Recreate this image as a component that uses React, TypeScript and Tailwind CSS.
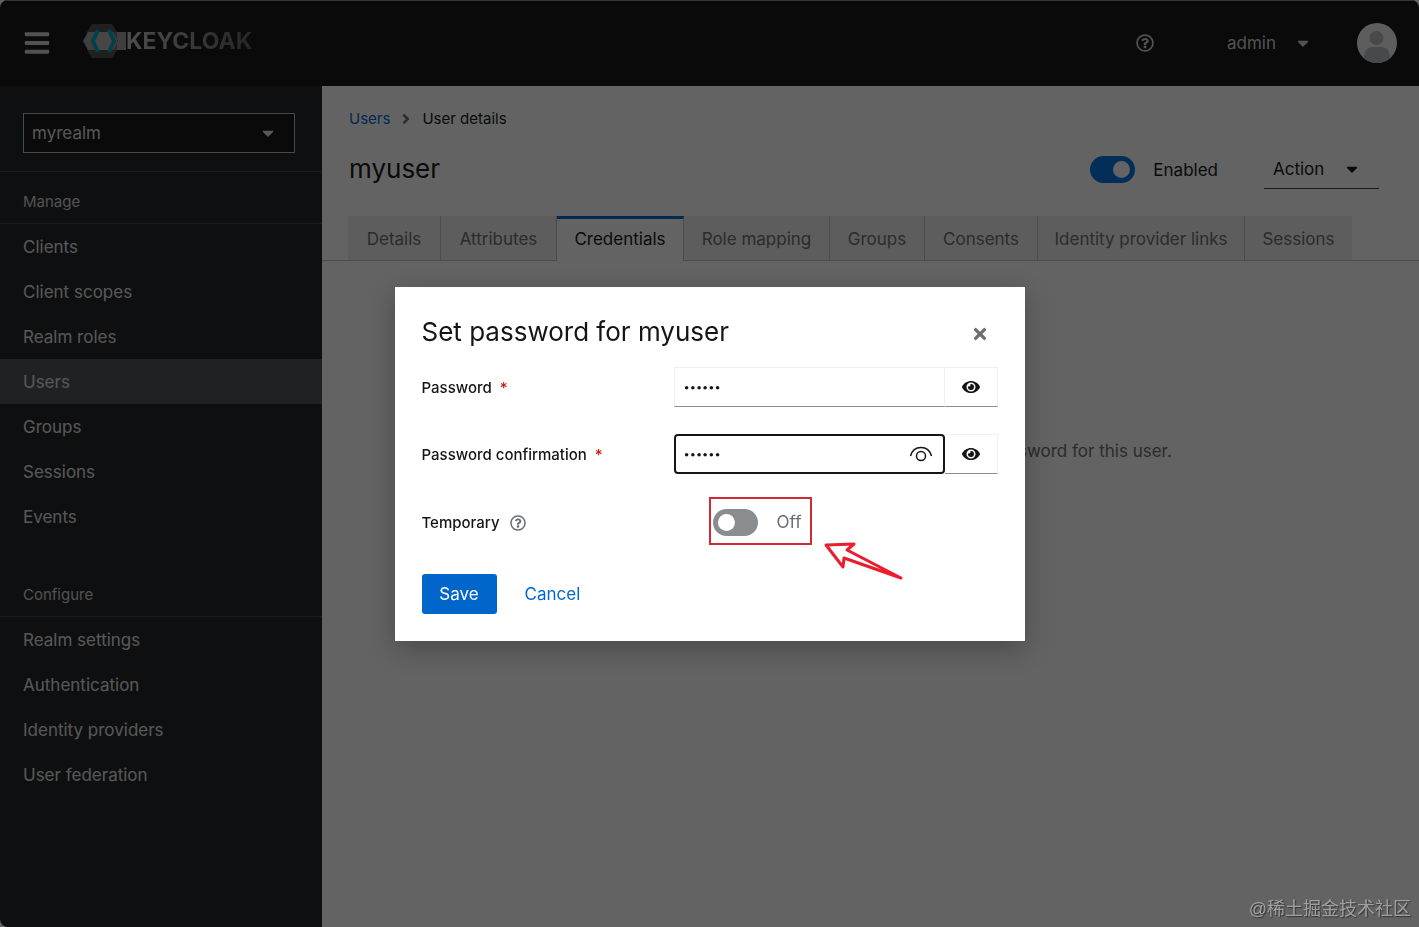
import { useState } from 'react'
import { FaAngleRight, FaBars, FaCaretDown, FaEye, FaRegQuestionCircle, FaTimes } from 'react-icons/fa'
import clsx from 'clsx'

const manageNav = ['Clients', 'Client scopes', 'Realm roles', 'Users', 'Groups', 'Sessions', 'Events']
const configureNav = ['Realm settings', 'Authentication', 'Identity providers', 'User federation']

const tabs = [
  { name: 'Details', width: 'w-[93px]' },
  { name: 'Attributes', width: 'w-[116px]' },
  { name: 'Credentials', width: 'w-[127px]' },
  { name: 'Role mapping', width: 'w-[146px]' },
  { name: 'Groups', width: 'w-[95px]' },
  { name: 'Consents', width: 'w-[113px]' },
  { name: 'Identity provider links', width: 'w-[207px]' },
  { name: 'Sessions', width: 'w-[107px]' },
]

function Logo() {
  return (
    <a href="#home" aria-label="Keycloak" className="mb-[3px] flex items-center">
      <svg width="44" height="36" viewBox="0 0 44 36" aria-hidden="true">
        <path d="M10 1h20l5 8v18l-5 8H10l-5-8V9z" fill="#505050" />
        <path d="M6 9h38v18H6L1 18z" fill="#a0a0a0" />
        <path d="M31 9h4v18h-4l5-9z" fill="#707070" />
        <path d="M17 9h9l6 9-6 9h-9l-6-9z" fill="#b4b4b4" />
        <path d="m16 7-5 11 5 11M27 7l5 11-5 11" fill="none" stroke="#00a5c0" strokeWidth="4" />
      </svg>
      <span className="bg-gradient-to-r from-[#c8c8c8] to-[#606060] bg-clip-text text-[23px] leading-none font-bold text-transparent">
        KEYCLOAK
      </span>
    </a>
  )
}

function Header() {
  return (
    <header className="flex h-[86px] items-center border-t border-[#8a8d90] bg-[#151515] pr-[22px] pb-0.5 pl-[23px] text-[#d2d2d2]">
      <button aria-label="Global navigation" className="mr-[31px]">
        <FaBars className="size-7" />
      </button>
      <Logo />
      <button aria-label="Help" className="mr-[73px] ml-auto">
        <FaRegQuestionCircle className="size-[18px]" />
      </button>
      <button className="mr-[45px] flex items-center gap-[18px]">
        <span className="pt-0.5">admin</span>
        <FaCaretDown className="size-[18px]" />
      </button>
      <svg width="40" height="40" viewBox="0 0 40 40" role="img" aria-label="Avatar">
        <clipPath id="avatar">
          <circle cx="20" cy="20" r="20" />
        </clipPath>
        <g clipPath="url(#avatar)">
          <path fill="#f0f0f0" d="M0 0h40v40H0z" />
          <circle cx="19.500" cy="15" r="7" fill="#b8bbbe" />
          <path d="M7 40V33q1-9 9-9h8q8 0 9 9v7z" fill="#b8bbbe" />
        </g>
      </svg>
    </header>
  )
}

function NavSection({ title, items, className }: { title: string; items: string[]; className?: string }) {
  return (
    <section className={className}>
      <h2 className="border-b border-[#3c3f42] px-[23px] pt-[17px] pb-[9px] text-[15px] leading-[25px] text-[#d2d2d2]">
        {title}
      </h2>
      <ul>
        {items.map((item) => (
          <li key={item}>
            <a
              href={'#' + item}
              aria-current={item === 'Users' ? 'page' : undefined}
              className={clsx('block px-[23px] pt-0.5 leading-[43px]', item === 'Users' && 'bg-[#4f5255]')}
            >
              {item}
            </a>
          </li>
        ))}
      </ul>
    </section>
  )
}

function Sidebar() {
  return (
    <aside className="w-[322px] shrink-0 bg-[#212427] text-[#e0e0e0]">
      <div className="border-b border-[#3c3f42] px-[23px] pt-[27px] pb-[18px]">
        <div className="relative mr-1">
          <select
            aria-label="Realm"
            className="block h-10 w-full appearance-none border border-[#b8bbbe] bg-[#151515] px-2"
          >
            <option>myrealm</option>
          </select>
          <FaCaretDown className="pointer-events-none absolute top-[11px] right-[18px] size-[18px]" />
        </div>
      </div>
      <nav aria-label="Global">
        <NavSection title="Manage" items={manageNav} />
        <NavSection title="Configure" items={configureNav} className="mt-[26px]" />
      </nav>
    </aside>
  )
}

function UserDetails() {
  return (
    <main className="min-w-0 flex-1 bg-white text-[#151515]">
      <div className="px-[27px] pt-[21px]">
        <nav aria-label="Breadcrumb" className="flex items-center text-[15px] leading-6">
          <a href="#Users" className="text-[#0066cc]">Users</a>
          <FaAngleRight className="mx-2 size-4 text-[#6a6e73]" />
          <span>User details</span>
        </nav>
        <div className="mt-[18px] flex h-10 items-center pr-[13px]">
          <h1 className="text-[26px] leading-9">myuser</h1>
          <label className="ml-auto flex items-center gap-[18px]">
            <input type="checkbox" role="switch" defaultChecked className="peer sr-only" />
            <span className="flex h-[27px] w-[45px] items-center justify-end rounded-full bg-[#0073e0] px-[5px]">
              <span className="size-[17px] rounded-full bg-white" />
            </span>
            <span className="pt-0.5">Enabled</span>
          </label>
          <button className="ml-[46px] flex h-10 w-[115px] items-center justify-between border-b border-[#3c3f42] pr-[18px] pl-[9px]">
            <span className="pt-0.5">Action</span>
            <FaCaretDown className="size-[18px]" />
          </button>
        </div>
      </div>
      <div role="tablist" className="mt-[27px] flex border-b border-[#c2c2c2] px-[26px]">
        {tabs.map((tab) => {
          const isActive = tab.name === 'Credentials'
          return (
            <button
              key={tab.name}
              role="tab"
              aria-selected={isActive}
              className={clsx(
                'shrink-0 border-r border-[#c2c2c2] text-center whitespace-nowrap last:border-r-0',
                tab.width,
                isActive
                  ? '-mb-px h-[45px] border-t-3 border-t-[#0066cc] bg-white pb-0.5'
                  : 'h-11 bg-[#f0f0f0] pt-0.5 text-[#6a6e73]'
              )}
            >
              {tab.name}
            </button>
          )
        })}
      </div>
      <p className="mt-[177px] pr-2 text-center leading-[27px] text-[#6a6e73]">
        This user does not have any credentials. You can set password for this user.
      </p>
    </main>
  )
}

function PasswordField({ id, label, focused }: { id: string; label: string; focused?: boolean }) {
  const [value, setValue] = useState('123456')
  const [shown, setShown] = useState(false)

  return (
    <div className="grid grid-cols-[252px_1fr] items-center">
      <label htmlFor={id} className="pt-0.5 text-[15px] font-medium">
        {label} <span className="ml-1 text-[#c9190b]">*</span>
      </label>
      <div className="flex h-10">
        <div className="relative min-w-0 flex-1">
          <input
            id={id}
            type={shown ? 'text' : 'password'}
            value={value}
            onChange={(e) => setValue(e.target.value)}
            className={clsx(
              'h-full w-full bg-white outline-none',
              shown ? 'text-base' : 'text-[11px]',
              focused ? 'rounded-sm border-2 border-[#151515] px-2' : 'border border-[#f0f0f0] border-b-[#8a8d90] px-[9px]'
            )}
          />
          {focused && (
            <svg className="absolute top-3 right-3 h-4 w-6" viewBox="0 0 24 16" fill="none" stroke="#151515" strokeWidth="1.500" aria-hidden="true">
              <path d="M1.500 10C3 4.500 7 1.500 12 1.500S21 4.500 22.500 10" />
              <circle cx="12" cy="10" r="4.500" />
            </svg>
          )}
        </div>
        <button
          type="button"
          aria-label="Show password"
          onClick={() => setShown(!shown)}
          className="flex w-[53px] items-center justify-center border border-l-0 border-[#f0f0f0] border-b-[#8a8d90]"
        >
          <FaEye className="size-[18px]" />
        </button>
      </div>
    </div>
  )
}

function PasswordModal() {
  return (
    <div className="fixed inset-0 flex items-center justify-center bg-[#030303]/62">
      <form
        role="dialog"
        aria-labelledby="modal-title"
        onSubmit={(e) => e.preventDefault()}
        className="w-[630px] bg-white p-[27px] text-[#151515] shadow-[0_8px_24px_rgba(3,3,3,0.25)]"
      >
        <div className="flex h-9 items-center justify-between pr-[9px]">
          <h2 id="modal-title" className="text-[26px] leading-9">Set password for myuser</h2>
          <button type="button" aria-label="Close" className="pt-1">
            <FaTimes className="size-[18px] text-[#6a6e73]" />
          </button>
        </div>

        <div className="mt-[17px] flex flex-col gap-[27px]">
          <PasswordField id="password" label="Password" />
          <PasswordField id="password-confirmation" label="Password confirmation" focused />
        </div>

        <div className="mt-[23px] grid h-12 grid-cols-[287px_1fr] items-center">
          <div className="flex items-center gap-2.5 pt-1 text-[15px] font-medium">
            <label htmlFor="temporary">Temporary</label>
            <button type="button" aria-label="Help for temporary">
              <FaRegQuestionCircle className="size-4 text-[#6a6e73]" />
            </button>
          </div>
          <div className="relative w-[103px]">
            <label className="flex h-12 items-center gap-[19px] border-2 border-[#d02a35] pt-1 pl-0.5 text-[#6a6e73]">
              <input id="temporary" type="checkbox" role="switch" className="sr-only" />
              <span className="flex h-[27px] w-[45px] items-center rounded-full bg-[#8a8d90] px-[5px]">
                <span className="size-[17px] rounded-full bg-white" />
              </span>
              Off
            </label>
            <svg
              className="absolute top-11 left-full ml-3 h-10 w-20"
              viewBox="0 0 80 40"
              fill="none"
              stroke="#ec1c2e"
              strokeWidth="3"
              strokeLinecap="round"
              strokeLinejoin="round"
              aria-hidden="true"
            >
              <path d="M77 37 23 9l7-6L2 4l17 22 1-9z" />
            </svg>
          </div>
        </div>

        <div className="mt-[29px] flex items-center gap-7">
          <button type="submit" className="h-10 w-[75px] rounded-[3px] bg-[#0066cc] pt-0.5 text-white">Save</button>
          <button type="button" className="pt-0.5 text-[#0066cc]">Cancel</button>
        </div>
      </form>
    </div>
  )
}

export default function App() {
  return (
    <div className="flex min-h-screen flex-col overflow-hidden rounded-lg font-['Inter',sans-serif] text-[17px] leading-[27px]">
      <Header />
      <div className="flex flex-1">
        <Sidebar />
        <UserDetails />
      </div>
      <PasswordModal />
      <div className="fixed right-2 bottom-1 font-['Liberation_Sans','Noto_Sans_CJK_SC',sans-serif] text-lg text-[#a0a0a0] [text-shadow:1px_1px_1px_#333]">
        @稀土掘金技术社区
      </div>
    </div>
  )
}
